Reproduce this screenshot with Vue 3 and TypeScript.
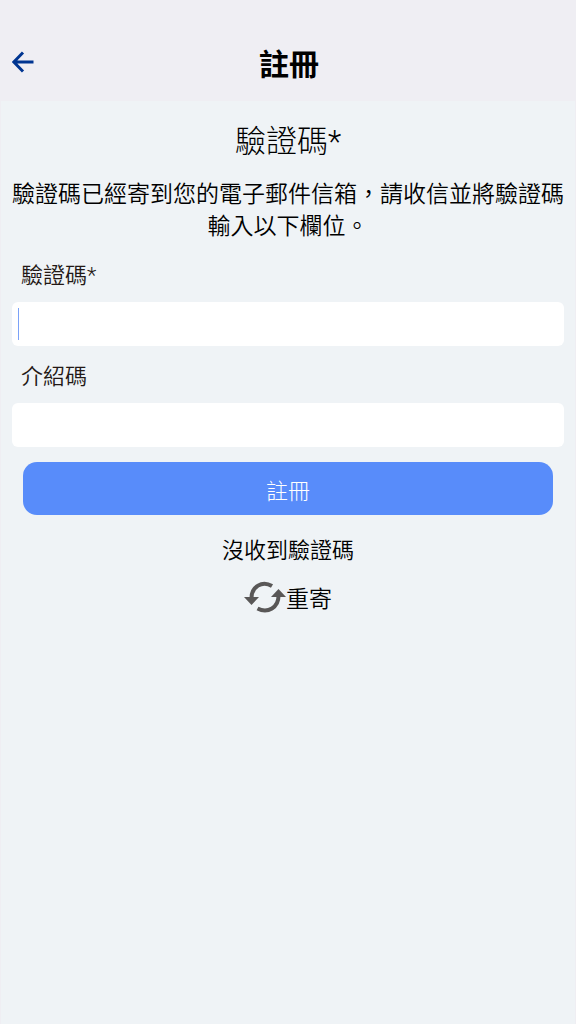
<script setup lang="ts">
import { ref } from 'vue'

const code = ref('')
const referral = ref('')
</script>

<template>
  <div class="page" lang="zh-Hant">
    <header class="bar">
      <button class="back" type="button" aria-label="返回">
        <svg viewBox="0 0 22 22" width="22" height="22" aria-hidden="true">
          <path d="M11 1.500 L1.800 11 L11 20.500 M2 11 H21.500" />
        </svg>
      </button>
      <h1>註冊</h1>
    </header>
    <main class="content">
      <h2>驗證碼<span class="star">*</span></h2>
      <p class="message">驗證碼已經寄到您的電子郵件信箱，請收信並將驗證碼輸入以下欄位。</p>
      <form @submit.prevent>
        <label for="code">驗證碼<span class="star">*</span></label>
        <div class="field">
          <input id="code" v-model="code" type="text" />
          <span v-if="!code" class="caret"></span>
        </div>
        <label for="referral">介紹碼</label>
        <div class="field">
          <input id="referral" v-model="referral" type="text" />
        </div>
        <button class="submit" type="submit">註冊</button>
      </form>
      <p class="hint">沒收到驗證碼</p>
      <button class="resend" type="button">
        <svg viewBox="0 0 42 32" width="42" height="32" aria-hidden="true">
          <path class="arc" d="M28 5 C18 -1 7.500 6 7.500 17 M13.500 27.500 C24 33 34.500 26 34.500 15" />
          <path class="head" d="M0 16 H15 L7.500 24 Z M27 16 L34.500 8 L42 16 Z" />
        </svg>
        <span>重寄</span>
      </button>
    </main>
  </div>
</template>

<style>
body {
  margin: 0;
  background: #eff3f6;
}
</style>

<style scoped>
.page {
  display: flex;
  flex-direction: column;
  min-height: 100vh;
  background: #eff3f6;
  color: #000;
  font-family: "Noto Sans CJK TC", sans-serif;
  font-size: 22px;
  font-weight: 350;
  line-height: 32px;
}

.bar {
  display: grid;
  grid-template-columns: 48px 1fr 46px;
  align-items: center;
  box-sizing: border-box;
  height: 101px;
  padding-top: 22px;
  background: #efeef3;
}

.back {
  display: flex;
  padding: 0 0 0 12px;
  border: 0;
  background: none;
}

.back path {
  fill: none;
  stroke: #003591;
  stroke-width: 3;
}

h1 {
  margin: 0;
  font-size: 30px;
  font-weight: 700;
  text-align: center;
}

.content {
  flex: 1;
  padding: 15px 11px;
  border: solid #efeef3;
  border-width: 0 1px;
}

h2 {
  margin: 0;
  font-size: 31px;
  font-weight: 300;
  line-height: 46px;
  text-align: center;
}

.star {
  font-family: Roboto, sans-serif;
  font-weight: 350;
  line-height: 1;
}

.message {
  margin: 14px 0 0;
  font-size: 23px;
  text-align: center;
}

label {
  display: block;
  padding: 17px 9px 13px;
  color: #231815;
}

.field {
  position: relative;
}

.field + label {
  padding-top: 12px;
}

input {
  display: block;
  box-sizing: border-box;
  width: 100%;
  height: 44px;
  padding: 0 6px;
  border: 0;
  border-radius: 6px;
  background: #fff;
  font: inherit;
}

.caret {
  position: absolute;
  top: 6px;
  left: 6px;
  width: 1px;
  height: 32px;
  background: #7ba2f8;
}

.submit {
  display: block;
  width: calc(100% - 22px);
  height: 53px;
  margin: 15px auto 0;
  padding: 0;
  border: 0;
  border-radius: 14px;
  background: #588cfa;
  color: #fff;
  font: inherit;
  font-weight: 300;
}

.hint {
  margin: 17px 0 0;
  text-align: center;
}

.resend {
  display: flex;
  align-items: center;
  margin: 17px auto 0;
  padding: 0;
  border: 0;
  background: none;
  color: #000;
  font: inherit;
  font-size: 23px;
}

.arc {
  fill: none;
  stroke: #595757;
  stroke-width: 4;
}

.head {
  fill: #595757;
}
</style>
